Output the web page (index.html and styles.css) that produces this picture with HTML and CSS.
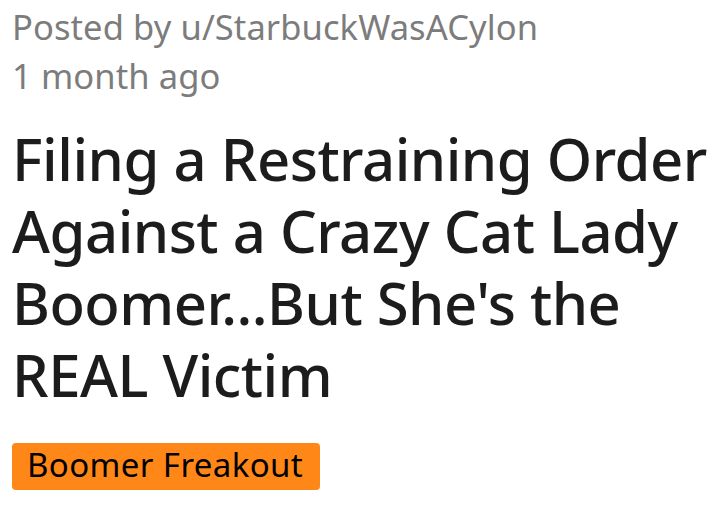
FILE: index.html
```html
<!DOCTYPE html>
<html>
<head>
<meta charset="utf-8">
<link rel="stylesheet" href="styles.css">
</head>
<body>
<div class="post">
  <div class="meta">
    <div class="meta-line">Posted by u/StarbuckWasACylon</div>
    <div class="meta-line">1 month ago</div>
  </div>
  <h1 class="title">Filing a Restraining Order<br>Against a Crazy Cat Lady<br>Boomer...But She's the<br>REAL Victim</h1>
  <div class="flair-row"><span class="flair">Boomer Freakout</span></div>
</div>
</body>
</html>
```
FILE: styles.css
```css
html, body {
  margin: 0;
  padding: 0;
  background: #ffffff;
}
.post {
  padding: 2px 0 0 12px;
  font-family: "Noto Sans", "DejaVu Sans", sans-serif;
}
.meta {
  color: #7c7c7c;
  font-size: 34.5px;
  line-height: 49px;
  letter-spacing: 0.1px;
  white-space: nowrap;
}
.title {
  margin: 23px 0 0 0;
  font-size: 58px;
  font-weight: 500;
  letter-spacing: -0.5px;
  line-height: 72px;
  color: #1c1c1c;
  white-space: nowrap;
}
.flair-row {
  margin-top: 32px;
}
.flair {
  display: inline-block;
  background: #ff8717;
  color: #000;
  font-size: 33px;
  letter-spacing: 0.4px;
  line-height: 43px;
  padding: 0 17px 4px 15px;
  border-radius: 4px;
}
```
